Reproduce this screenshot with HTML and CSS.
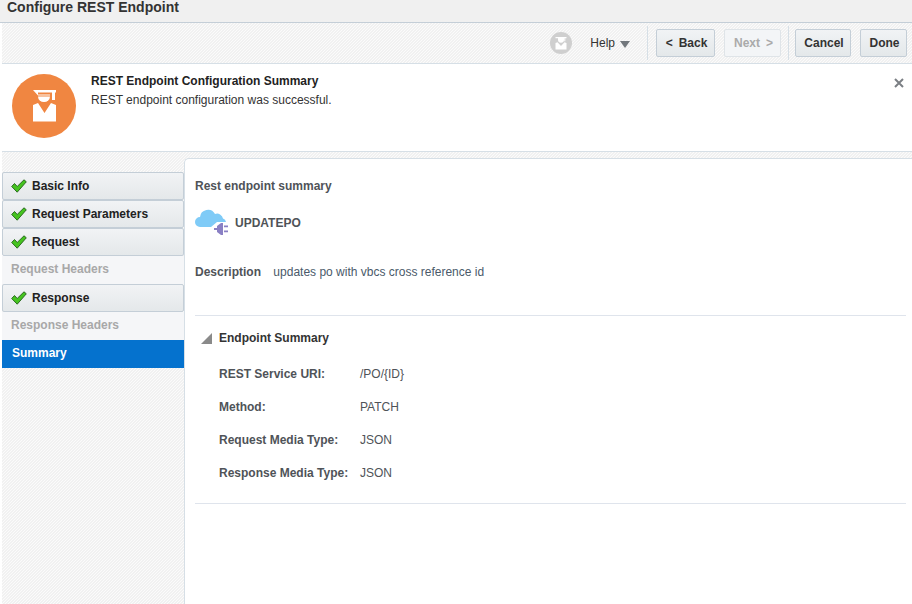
FILE: index.html
```html
<!DOCTYPE html>
<html lang="en">
<head>
  <meta charset="UTF-8">
  <title>Configure REST Endpoint</title>
  <link rel="stylesheet" href="styles.css">
</head>
<body>
  <div class="title-bar">
    <h1>Configure REST Endpoint</h1>
  </div>

  <div class="toolbar">
    <svg class="help-badge" width="22" height="22" viewBox="0 0 22 22">
      <circle cx="11" cy="11" r="11" fill="#cfcfcf"/>
      <path d="M5.500 5h11v1.200h-1.200v3h-1V6.200H14v1.500a3 3 0 0 1-6 0V6.200H5.500z" fill="#fff"/>
      <path d="M5.500 11l2-.8L11 14l3.500-3.800 2 .8v6.500h-11z" fill="#fff"/>
    </svg>
    <span class="help-link">Help</span>
    <span class="help-arrow"></span>
    <span class="tool-sep"></span>
    <button class="btn btn-back"><b>&lt;</b>Back</button>
    <button class="btn btn-next" disabled>Next<b>&gt;</b></button>
    <span class="tool-sep"></span>
    <button class="btn btn-cancel">Cancel</button>
    <button class="btn btn-done">Done</button>
  </div>

  <div class="message">
    <svg class="message-icon" width="64" height="64" viewBox="0 0 64 64">
      <circle cx="32" cy="32" r="32" fill="#f08641"/>
      <path d="M21 16h23v2.500h-1v7.500h-3v-7.500H26v2h12v1H26z" fill="#fff"/>
      <path d="M26 22.500h12a6 5.500 0 0 1-12 0z" fill="#fff"/>
      <path d="M21 31l5-2 6.500 10L39 29l5 2v16.500H21z" fill="#fff"/>
    </svg>
    <div class="message-text">
      <div class="message-title">REST Endpoint Configuration Summary</div>
      <div>REST endpoint configuration was successful.</div>
    </div>
    <svg class="message-close" width="10" height="10" viewBox="0 0 10 10">
      <path d="M1 1l8 8M9 1l-8 8" stroke="#7b7f84" stroke-width="2"/>
    </svg>
  </div>

  <div class="content">
    <div class="steps">
      <div class="step done"><svg class="check" width="16" height="14" viewBox="0 0 16 14"><path d="M.7 7.500L3.500 4.500l2.700 3L13 .8l2.300 2L6.200 13.200z" fill="#45c41f" stroke="#2c6b22"/></svg>Basic Info</div>
      <div class="step done"><svg class="check" width="16" height="14" viewBox="0 0 16 14"><path d="M.7 7.500L3.500 4.500l2.700 3L13 .8l2.300 2L6.200 13.200z" fill="#45c41f" stroke="#2c6b22"/></svg>Request Parameters</div>
      <div class="step done"><svg class="check" width="16" height="14" viewBox="0 0 16 14"><path d="M.7 7.500L3.500 4.500l2.700 3L13 .8l2.300 2L6.200 13.200z" fill="#45c41f" stroke="#2c6b22"/></svg>Request</div>
      <div class="step off">Request Headers</div>
      <div class="step done"><svg class="check" width="16" height="14" viewBox="0 0 16 14"><path d="M.7 7.500L3.500 4.500l2.700 3L13 .8l2.300 2L6.200 13.200z" fill="#45c41f" stroke="#2c6b22"/></svg>Response</div>
      <div class="step off">Response Headers</div>
      <div class="step active">Summary</div>
    </div>

    <div class="panel">
      <div class="panel-title">Rest endpoint summary</div>
      <div class="endpoint">
        <svg width="34" height="28" viewBox="0 0 34 28">
          <path d="M5 18a5 5 0 0 1 0-10 8 8 0 0 1 15-3 6 6 0 0 1 8 4.500 4.500 4.500 0 0 1 3 3.500H22l-6 5z" fill="#7fcbf7"/>
          <path d="M19 19h3v-2l4-3h2v12h-2l-4-3v-2h-3z" fill="#8a80c4"/>
          <path d="M29 16.500h4v1.800h-4z M29 21.500h4v1.800h-4z" fill="#8a80c4"/>
        </svg>
        <span class="endpoint-name">UPDATEPO</span>
      </div>
      <div class="description">
        <span class="label">Description</span>
        <span class="desc-text">updates po with vbcs cross reference id</span>
      </div>

      <div class="section">
        <div class="section-head"><span class="twisty"></span>Endpoint Summary</div>
        <div class="fields">
          <div class="field"><span class="label">REST Service URI:</span><span>/PO/{ID}</span></div>
          <div class="field"><span class="label">Method:</span><span>PATCH</span></div>
          <div class="field"><span class="label">Request Media Type:</span><span>JSON</span></div>
          <div class="field"><span class="label">Response Media Type:</span><span>JSON</span></div>
        </div>
      </div>
    </div>
  </div>
</body>
</html>
```

FILE: styles.css
```css
html, body {
  height: 100%;
}
body {
  margin: 0;
  height: 604px;
  overflow: hidden;
  display: flex;
  flex-direction: column;
  font-family: "Liberation Sans", Arial, sans-serif;
  font-size: 12px;
  color: #4f5358;
  background: #fff;
}
.title-bar {
  height: 22px;
  background: #f0f0f0;
  border-bottom: 1px solid #c4ced7;
  box-sizing: content-box;
}
.title-bar h1 {
  margin: 0;
  padding-left: 7px;
  font-size: 14px;
  line-height: 14px;
  color: #333;
}
.toolbar {
  height: 40px;
  margin-left: 2px;
  padding-right: 5px;
  display: flex;
  align-items: center;
  justify-content: flex-end;
  border-bottom: 1px solid #d6dfe6;
  background: repeating-linear-gradient(135deg, #f1f1f1 0 1.06px, #fbfbfb 1.06px 2.121px);
}
.help-badge {
  margin-right: 18px;
}
.help-link {
  color: #333;
}
.help-arrow {
  width: 0;
  height: 0;
  margin: 2px 0 0 5px;
  border-left: 5px solid transparent;
  border-right: 5px solid transparent;
  border-top: 7px solid #72777c;
}
.tool-sep {
  width: 1px;
  height: 34px;
  margin: 0 6px 0 17px;
  background: #d6dfe6;
}
.btn {
  height: 28px;
  padding: 0 0 0 2px;
  box-sizing: border-box;
  border: 1px solid #c4ced7;
  border-radius: 2px;
  background: linear-gradient(#f1f3f5, #e4e8ea);
  font: bold 12px "Liberation Sans", Arial, sans-serif;
  color: #333;
}
.btn b {
  display: inline-block;
}
.btn-back {
  width: 59px;
  margin-left: 2px;
}
.btn-back b {
  margin-right: 6px;
}
.btn-next {
  width: 57px;
  margin-left: 9px;
  color: #aaa;
  background: #f3f5f7;
  border-color: #dfe4e8;
}
.btn-next b {
  margin-left: 6px;
}
.btn-next + .tool-sep {
  margin: 0 6px 0 7px;
}
.btn-cancel {
  width: 56px;
}
.btn-done {
  width: 47px;
  margin-left: 9px;
}
.message {
  height: 87px;
  margin-left: 2px;
  display: flex;
  position: relative;
  border-bottom: 1px solid #d6dfe6;
  background: #fff;
}
.message-icon {
  margin: 10px 15px 0 10px;
}
.message-text {
  padding-top: 8px;
  line-height: 19px;
  color: #333;
}
.message-title {
  font-weight: bold;
  color: #222;
}
.message-close {
  position: absolute;
  top: 14px;
  right: 8px;
}
.content {
  flex: 1;
  display: flex;
  margin-left: 2px;
  padding-top: 6px;
  background: repeating-linear-gradient(135deg, #f1f1f1 0 1.06px, #fbfbfb 1.06px 2.121px);
}
.steps {
  width: 182px;
  padding-top: 14px;
  flex-shrink: 0;
}
.step {
  height: 28px;
  box-sizing: border-box;
  display: flex;
  align-items: center;
  font-weight: bold;
}
.step.done {
  padding-left: 8px;
  color: #222;
  border: 1px solid #c4ced7;
  border-radius: 2px;
  background: linear-gradient(#f1f3f5, #e4e8ea);
}
.check {
  margin-right: 5px;
}
.step.off {
  padding: 0 0 2px 9px;
  color: #a8a8a8;
  background: #f5f6f8;
}
.step.active {
  padding: 0 0 2px 10px;
  color: #fff;
  background: #0572ce;
}
.panel {
  flex: 1;
  padding: 20px 6px 0 10px;
  border: 1px solid #d6dfe6;
  border-right: 0;
  border-bottom: 0;
  border-radius: 5px 0 0 0;
  background: #fff;
}
.panel-title {
  font-weight: bold;
  line-height: 14px;
}
.endpoint {
  display: flex;
  align-items: center;
  margin-top: 15px;
  height: 30px;
}
.endpoint-name {
  margin-left: 6px;
  font-weight: bold;
}
.description {
  margin-top: 27px;
  line-height: 14px;
  padding-bottom: 36px;
  border-bottom: 1px solid #dfe4ec;
}
.label {
  font-weight: bold;
}
.desc-text {
  margin-left: 9px;
  color: #4a5a6a;
}
.section {
  border-bottom: 1px solid #dfe4ec;
  padding-bottom: 23px;
}
.section-head {
  display: flex;
  align-items: center;
  margin-top: 15px;
  padding-left: 6px;
  line-height: 14px;
  font-weight: bold;
  color: #333;
}
.twisty {
  width: 0;
  height: 0;
  margin-right: 7px;
  border-left: 11px solid transparent;
  border-bottom: 11px solid #8a8a8a;
}
.fields {
  display: grid;
  grid-template-columns: 141px 1fr;
  row-gap: 19px;
  margin-top: 22px;
  padding-left: 24px;
  line-height: 14px;
}
.field {
  display: contents;
}
```
